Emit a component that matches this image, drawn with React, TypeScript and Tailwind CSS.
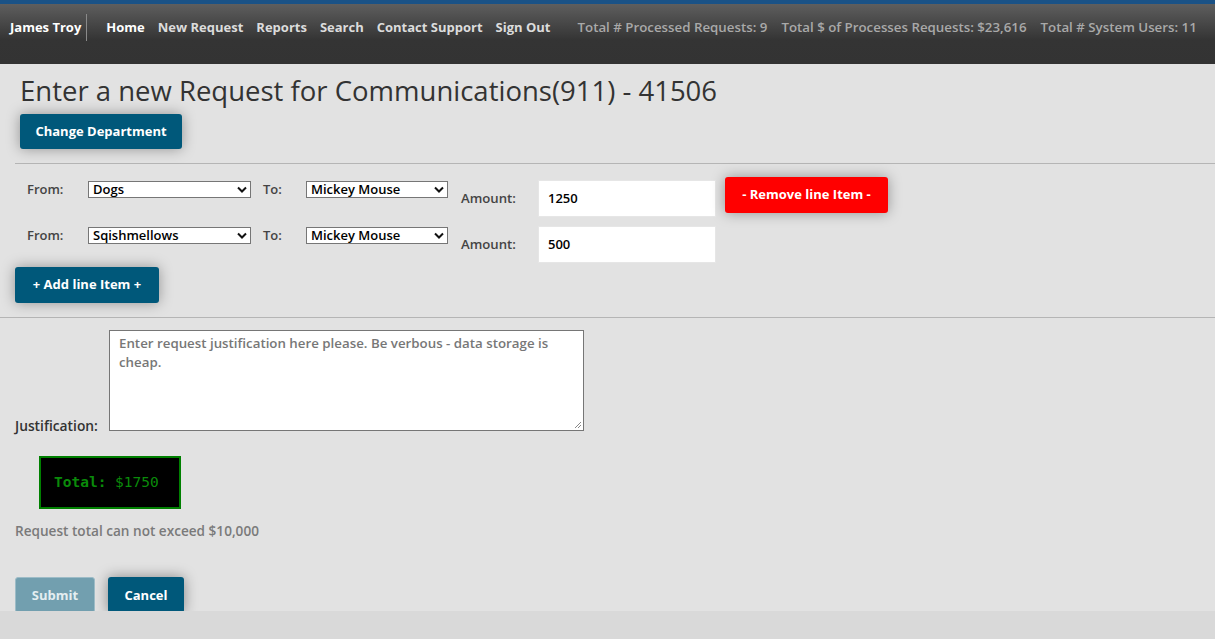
import React from "react";

const font = { fontFamily: '"Open Sans", "Liberation Sans", sans-serif' };

const Select = ({ value, w }: { value: string; w: string }) => (
  <div
    className={`${w} h-[17px] bg-white border border-[#767676] flex items-center justify-between pl-[4px] pr-[3px] text-[13px] font-semibold text-black leading-none`}
  >
    <span>{value}</span>
    <svg width="10" height="7" viewBox="0 0 10 7">
      <path d="M1 1.5 L5 5.5 L9 1.5" stroke="#111" strokeWidth="2" fill="none" />
    </svg>
  </div>
);

const LineItem = ({
  from,
  to,
  amount,
  remove,
}: {
  from: string;
  to: string;
  amount: string;
  remove?: boolean;
}) => (
  <div className="flex items-start h-[37px]">
    <div className="flex items-center">
      <span className="w-[73px] pl-[12px] text-[13px] font-semibold text-[#444]">From:</span>
      <Select value={from} w="w-[163px]" />
      <span className="w-[55px] pl-[12px] text-[13px] font-semibold text-[#444]">To:</span>
      <Select value={to} w="w-[142px]" />
    </div>
    <span className="self-center mt-[1px] w-[90px] pl-[13px] text-[13.2px] font-semibold text-[#444]">
      Amount:
    </span>
    <div className="w-[178px] h-[37px] bg-white border border-[#e6e6e6] flex items-center pl-[9px] text-[13px] font-semibold text-black">
      {amount}
    </div>
    {remove && (
      <button className="ml-[9px] mt-[-3px] w-[163px] h-[36px] bg-[#ff0000] rounded-[3px] text-white text-[13px] font-bold shadow-[0_0_14px_rgba(0,0,0,0.35)]">
        - Remove line Item -
      </button>
    )}
  </div>
);

export default function App() {
  return (
    <div className="min-h-[639px] flex flex-col bg-[#d9d9d9]" style={font}>
      <nav className="h-[64px] border-t-[4px] border-[#1a5286] bg-[linear-gradient(to_bottom,#5e5e5e,#343434_60%,#333)]">
        <div className="h-[47px] flex items-center text-[13px] font-bold">
          <span className="pl-[10px] pr-[5px] text-white">James Troy</span>
          <span className="w-px h-[27px] bg-[#8a8a8a]" />
          <div className="flex gap-[13px] pl-[19px] text-[#dcdcdc]">
            <span className="text-white">Home</span>
            <span>New Request</span>
            <span>Reports</span>
            <span>Search</span>
            <span>Contact Support</span>
            <span>Sign Out</span>
          </div>
          <div className="flex gap-[14px] pl-[27px] text-[13.3px] text-[#a9a9a9] font-semibold">
            <span>Total # Processed Requests: 9</span>
            <span>Total $ of Processes Requests: $23,616</span>
            <span>Total # System Users: 11</span>
          </div>
        </div>
      </nav>

      <main className="h-[547px] bg-[#e2e2e2]">
        <h1 className="pl-[20px] pt-[11px] text-[27.5px] leading-[32px] text-[#333]">
          Enter a new Request for Communications(911) - 41506
        </h1>
        <button className="ml-[20px] mt-[7px] w-[162px] h-[35px] bg-[#00587a] rounded-[3px] text-white text-[13px] font-bold shadow-[0_0_14px_rgba(0,0,0,0.35)]">
          Change Department
        </button>
        <div className="ml-[15px] mt-[14px] h-px bg-[#b5b5b5]" />

        <div className="pl-[15px] pt-[16px] flex flex-col gap-[9px]">
          <LineItem from="Dogs" to="Mickey Mouse" amount="1250" remove />
          <LineItem from="Sqishmellows" to="Mickey Mouse" amount="500" />
        </div>
        <button className="ml-[15px] mt-[4px] w-[144px] h-[36px] bg-[#00587a] rounded-[3px] text-white text-[13px] font-bold shadow-[0_0_14px_rgba(0,0,0,0.35)]">
          + Add line Item +
        </button>
        <div className="mt-[14px] h-px bg-[#b5b5b5]" />

        <div className="pl-[15px] pt-[12px] flex items-end">
          <span className="w-[94px] text-[13.8px] font-semibold text-[#333] leading-none mb-[-2px]">
            Justification:
          </span>
          <div className="w-[475px] h-[101px] bg-white border border-[#767676] relative px-[9px] pt-[3px] text-[13.3px] font-semibold text-[#777] leading-[19px]">
            Enter request justification here please. Be verbous - data storage is cheap.
            <svg className="absolute right-[1px] bottom-[1px]" width="8" height="8" viewBox="0 0 8 8">
              <path d="M7 1 L1 7 M7 4 L4 7" stroke="#888" strokeWidth="1" />
            </svg>
          </div>
        </div>

        <div className="ml-[39px] mt-[25px] w-[142px] h-[53px] bg-black border-[2px] border-[#008000] flex items-center pl-[13px] text-[14.5px] text-[#0a8a0a]" style={{ fontFamily: '"DejaVu Sans Mono", "Liberation Mono", monospace' }}>
          <span className="font-bold">Total:</span>
          <span>&nbsp;$1750</span>
        </div>
        <p className="pl-[15px] mt-[12px] text-[13.6px] font-semibold text-[#7a7a7a]">
          Request total can not exceed $10,000
        </p>

        <div className="pl-[15px] mt-[36px] flex gap-[13px] items-start">
          <button className="w-[80px] h-[36px] bg-[#729faf] border border-[#9dbcc7] rounded-[3px] text-[#e4eef1] text-[13px] font-bold">
            Submit
          </button>
          <button className="w-[76px] h-[36px] bg-[#00587a] rounded-[3px] text-white text-[13px] font-bold shadow-[0_0_14px_rgba(0,0,0,0.4)]">
            Cancel
          </button>
        </div>
      </main>
      <div className="flex-1 bg-[#d9d9d9]" />
    </div>
  );
}
